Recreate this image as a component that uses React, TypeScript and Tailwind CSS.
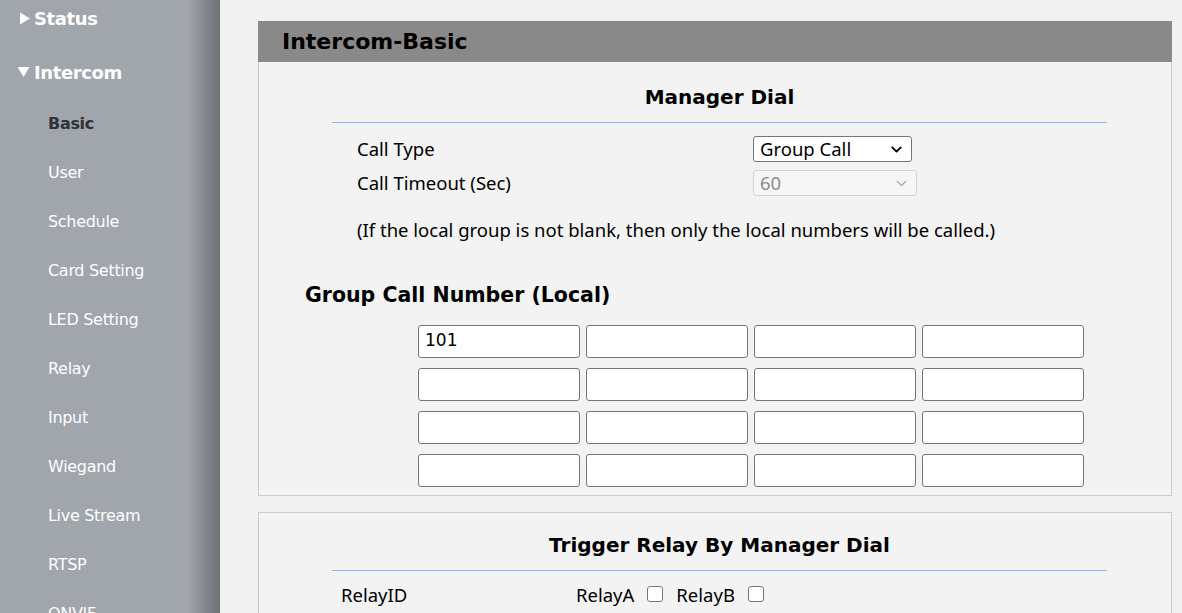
import { ChevronDown } from "lucide-react";

const navItems = [
  "User",
  "Schedule",
  "Card Setting",
  "LED Setting",
  "Relay",
  "Input",
  "Wiegand",
  "Live Stream",
  "RTSP",
  "ONVIF",
];

const tahoma = "font-['Tahoma','DejaVu_Sans',sans-serif]";
const segoe = "font-['Segoe_UI','Noto_Sans',sans-serif]";

function Sidebar() {
  return (
    <aside className={`relative w-[220px] shrink-0 bg-[#a1a5ac] ${tahoma} overflow-hidden`}>
      {/* right edge shade */}
      <div className="absolute right-0 top-0 h-full w-[32px] bg-gradient-to-r from-transparent to-[#6d7075]" />
      <div className="relative flex flex-col">
        <div className="flex items-center h-[36px] pl-[19px] text-white font-bold text-[18px] tracking-[-0.4px]">
          <svg width="12" height="13" viewBox="0 0 12 13" className="mr-[3px]">
            <path d="M1 0.5 L11 6.5 L1 12.5 Z" fill="white" />
          </svg>
          Status
        </div>
        <div className="flex items-center h-[36px] mt-[18px] pl-[17px] text-white font-bold text-[18px] tracking-[-0.4px]">
          <svg width="13" height="12" viewBox="0 0 13 12" className="mr-[4px]">
            <path d="M0.5 1 L12.5 1 L6.5 11 Z" fill="white" />
          </svg>
          Intercom
        </div>
        <div className="flex items-center h-[30px] mt-[19px] pl-[48px] text-[#2f3237] font-bold text-[16px] tracking-[-0.3px]">
          Basic
        </div>
        {navItems.map((n) => (
          <div
            key={n}
            className="flex items-center h-[30px] mt-[19px] pl-[48px] text-white text-[16px] tracking-[-0.3px]"
          >
            {n}
          </div>
        ))}
      </div>
    </aside>
  );
}

function Select({ value, disabled, width }: { value: string; disabled?: boolean; width: string }) {
  return (
    <div
      className={`flex items-center justify-between h-[26px] ${width} px-[6px] rounded-[3px] border ${
        disabled ? "border-[#d3d3d3] bg-[#f6f6f6] text-[#8c8c8c]" : "border-[#767676] bg-white text-black"
      } text-[18.5px] leading-[24px]`}
    >
      <span>{value}</span>
      <ChevronDown size={17} strokeWidth={disabled ? 1.6 : 2.6} className={disabled ? "text-[#9a9a9a]" : "text-black"} />
    </div>
  );
}

function SectionTitle({ children }: { children: string }) {
  return (
    <div className="ml-[73px] mr-[64px]">
      <div className={`text-center font-bold text-[20px] text-black ${tahoma} leading-[24px] pb-[13px]`}>
        {children}
      </div>
      <div className="h-px bg-[#8cb8ea]" />
    </div>
  );
}

export default function App() {
  const cells = Array.from({ length: 16 }, (_, i) => (i === 0 ? "101" : ""));
  return (
    <div className="flex w-[1182px] h-[613px] overflow-hidden bg-[#f1f1f1]">
      <Sidebar />
      <main className={`flex-1 pl-[38px] pr-[10px] pt-[21px] ${segoe} text-black`}>
        <div className="border border-[#cbcbcb] bg-[#f3f3f3]">
          <div className={`h-[41px] bg-[#898989] pl-[24px] flex items-center ${tahoma} font-bold text-[22px] text-black -mx-px -mt-px`}>
            Intercom-Basic
          </div>
          <div className="pt-[23px] pb-[8px]">
            <SectionTitle>Manager Dial</SectionTitle>
            <div className="pl-[98px] pt-[13px] flex flex-col gap-[8px] leading-[26px]">
              <div className="flex items-center">
                <span className="w-[396px] text-[18.5px]">Call Type</span>
                <Select value="Group Call" width="w-[159px]" />
              </div>
              <div className="flex items-center">
                <span className="w-[396px] text-[18.5px]">Call Timeout (Sec)</span>
                <Select value="60" disabled width="w-[164px]" />
              </div>
            </div>
            <p className="pl-[98px] mt-[20px] text-[18.5px]">
              (If the local group is not blank, then only the local numbers will be called.)
            </p>
            <div className={`pl-[46px] mt-[36px] ${tahoma} font-bold text-[20.5px]`}>
              Group Call Number (Local)
            </div>
            <div className="ml-[159px] mt-[14px] grid grid-cols-[repeat(4,162px)] gap-x-[6px] gap-y-[10px]">
              {cells.map((v, i) => (
                <div
                  key={i}
                  className={`h-[33px] rounded-[3px] border border-[#767676] bg-white px-[6px] flex items-center ${tahoma} text-[17px]`}
                >
                  {v}
                </div>
              ))}
            </div>
          </div>
        </div>

        <div className="mt-[16px] border border-[#cbcbcb] bg-[#f3f3f3] pt-[20px] h-[200px]">
          <SectionTitle>Trigger Relay By Manager Dial</SectionTitle>
          <div className="flex items-center pl-[82px] mt-[10px] text-[18.5px]">
            <span className="w-[235px]">RelayID</span>
            <span>RelayA</span>
            <span className="ml-[13px] w-[16px] h-[16px] rounded-[3px] border border-[#767676] bg-white" />
            <span className="ml-[13px]">RelayB</span>
            <span className="ml-[13px] w-[16px] h-[16px] rounded-[3px] border border-[#767676] bg-white" />
          </div>
        </div>
      </main>
    </div>
  );
}
